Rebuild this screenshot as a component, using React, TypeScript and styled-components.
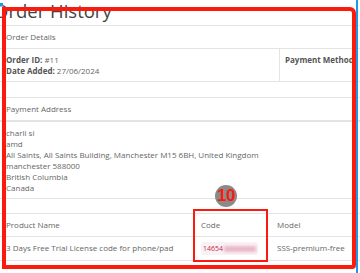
import styled, { createGlobalStyle } from 'styled-components'

const GlobalStyle = createGlobalStyle`
  html, body {
    margin: 0;
    padding: 0;
    background: #fff;
  }
  body {
    font-family: 'Open Sans', 'DejaVu Sans', sans-serif;
    overflow: hidden;
  }
`

const Frame = styled.div`
  position: relative;
  width: 360px;
  height: 273px;
  overflow: hidden;
  background: #fff;
`

const Content = styled.div`
  margin-left: -2px;
  width: 420px;
`

const Title = styled.h1`
  margin: 1px 0 4px -4px;
  font-size: 18.5px;
  font-weight: 400;
  line-height: 20px;
  color: #444;
`

const Table = styled.table<{ $gap?: number }>`
  width: 100%;
  border-collapse: collapse;
  margin-bottom: ${(p) => p.$gap ?? 14}px;
  font-size: 8px;
  line-height: 11px;
  color: #666;
`

const Head = styled.td<{ $thick?: boolean; $w?: number }>`
  padding: 5px 8px 6px;
  border-top: 1px solid #e4e4e4;
  border-bottom: ${(p) => (p.$thick ? '2px solid #e4e4e4' : '1px solid #e4e4e4')};
  text-align: left;
  font-weight: 400;
  width: ${(p) => (p.$w ? `${p.$w}px` : 'auto')};
`

const Cell = styled.td<{ $split?: boolean; $w?: number }>`
  padding: 5px 8px;
  padding-left: ${(p) => (p.$split ? 5 : 8)}px;
  border-bottom: 1px solid #e4e4e4;
  border-left: ${(p) => (p.$split ? '1px solid #e4e4e4' : 'none')};
  vertical-align: top;
  width: ${(p) => (p.$w ? `${p.$w}px` : 'auto')};
`

const Label = styled.b`
  font-weight: 700;
  color: #555;
`

const CodeTag = styled.code`
  display: inline-flex;
  align-items: center;
  font-family: 'Open Sans', sans-serif;
  font-size: 7px;
  color: #c7254e;
  background: #f9f2f4;
  padding: 1px 2px;
  border-radius: 2px;
`

const Blurred = styled.span`
  display: inline-block;
  width: 32px;
  height: 6px;
  margin-left: 1px;
  background: #eab7c9;
  filter: blur(1.5px);
`

const BigMark = styled.div`
  position: absolute;
  left: 2px;
  top: 7px;
  width: 346px;
  height: 254px;
  border: 4px solid #fa1a0e;
  border-radius: 0 6px 4px 0;
`

const CodeMark = styled.div`
  position: absolute;
  left: 193px;
  top: 209px;
  width: 71px;
  height: 49px;
  border: 2.5px solid #fa1a0e;
`

const Badge = styled.div`
  position: absolute;
  left: 215px;
  top: 185px;
  width: 22px;
  height: 22px;
  border-radius: 50%;
  background: #8a8a8a;
  color: #fa1a0e;
  font-family: 'Liberation Sans', Arial, sans-serif;
  font-weight: 700;
  font-size: 17px;
  line-height: 22px;
  text-align: center;
  letter-spacing: -0.5px;
`

const EdgeLine = styled.div`
  position: absolute;
  right: 2px;
  top: 0;
  bottom: 0;
  width: 2px;
  background: #1a9bea;
`

const CornerTick = styled.div`
  position: absolute;
  left: 0;
  top: 3px;
  width: 3px;
  height: 3px;
  background: #1a9bea;
`

export default function App() {
  return (
    <>
      <GlobalStyle />
      <Frame>
        <Content>
          <Title>Order History</Title>
          <Table $gap={15}>
            <thead>
              <tr>
                <Head colSpan={2}>Order Details</Head>
              </tr>
            </thead>
            <tbody>
              <tr>
                <Cell $w={265}>
                  <Label>Order ID:</Label> #11
                  <br />
                  <Label>Date Added:</Label> 27/06/2024
                </Cell>
                <Cell $split>
                  <Label>Payment Method:</Label>
                </Cell>
              </tr>
            </tbody>
          </Table>
          <Table>
            <thead>
              <tr>
                <Head $thick>Payment Address</Head>
              </tr>
            </thead>
            <tbody>
              <tr>
                <Cell>
                  charli si
                  <br />
                  amd
                  <br />
                  All Saints, All Saints Building, Manchester M15 6BH, United Kingdom
                  <br />
                  manchester 588000
                  <br />
                  British Columbia
                  <br />
                  Canada
                </Cell>
              </tr>
            </tbody>
          </Table>
          <Table>
            <thead>
              <tr>
                <Head $w={179}>Product Name</Head>
                <Head $w={60}>Code</Head>
                <Head>Model</Head>
              </tr>
            </thead>
            <tbody>
              <tr>
                <Cell>3 Days Free Trial License code for phone/pad</Cell>
                <Cell>
                  <CodeTag>
                    14654
                    <Blurred />
                  </CodeTag>
                </Cell>
                <Cell>SSS-premium-free</Cell>
              </tr>
            </tbody>
          </Table>
        </Content>
        <BigMark />
        <CodeMark />
        <Badge>10</Badge>
        <EdgeLine />
        <CornerTick />
      </Frame>
    </>
  )
}
